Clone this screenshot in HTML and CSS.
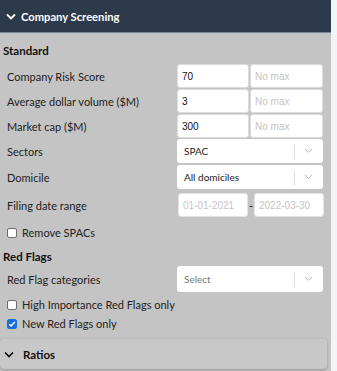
FILE: index.html
```html
<!DOCTYPE html>
<html lang="en">
<head>
  <meta charset="UTF-8" />
  <title>Company Screening</title>
  <link rel="stylesheet" href="styles.css">
</head>
<body>

  <div class="panel">
    <div class="panel-header">
      <svg class="chevron" width="10" height="7" viewBox="0 0 10 7"><path d="M1 1.5l4 4 4-4" fill="none" stroke="#fff" stroke-width="1.8"/></svg>
      Company Screening
    </div>

    <div class="section-title">Standard</div>

    <div class="row first-row">
      <label>Company Risk Score</label>
      <div class="pair">
        <input type="text" value="70">
        <input type="text" placeholder="No max">
      </div>
    </div>
    <div class="row">
      <label>Average dollar volume ($M)</label>
      <div class="pair">
        <input type="text" value="3">
        <input type="text" placeholder="No max">
      </div>
    </div>
    <div class="row">
      <label>Market cap ($M)</label>
      <div class="pair">
        <input type="text" value="300">
        <input type="text" placeholder="No max">
      </div>
    </div>
    <div class="row">
      <label>Sectors</label>
      <div class="select">
        <span>SPAC</span>
        <span class="sep"></span>
        <svg width="9" height="6" viewBox="0 0 9 6"><path d="M1 1l3.5 3.5L8 1" fill="none" stroke="#bbb" stroke-width="1"/></svg>
      </div>
    </div>
    <div class="row row-gap">
      <label>Domicile</label>
      <div class="select">
        <span>All domiciles</span>
        <span class="sep"></span>
        <svg width="9" height="6" viewBox="0 0 9 6"><path d="M1 1l3.5 3.5L8 1" fill="none" stroke="#bbb" stroke-width="1"/></svg>
      </div>
    </div>
    <div class="row date-row">
      <label>Filing date range</label>
      <div class="dates">
        <input type="text" placeholder="01-01-2021">
        <span class="dash">-</span>
        <input type="text" placeholder="2022-03-30">
      </div>
    </div>

    <div class="check first-check">
      <span class="box"></span>
      Remove SPACs
    </div>

    <div class="section-title flags-title">Red Flags</div>

    <div class="row flag-row">
      <label>Red Flag categories</label>
      <div class="select tall">
        <span class="placeholder">Select</span>
        <span class="sep"></span>
        <svg width="9" height="6" viewBox="0 0 9 6"><path d="M1 1l3.5 3.5L8 1" fill="none" stroke="#bbb" stroke-width="1"/></svg>
      </div>
    </div>

    <div class="check">
      <span class="box"></span>
      High Importance Red Flags only
    </div>
    <div class="check">
      <span class="box checked">
        <svg width="8" height="8" viewBox="0 0 8 8"><path d="M1.3 4.2l1.8 1.8L6.8 2" fill="none" stroke="#fff" stroke-width="1.5"/></svg>
      </span>
      New Red Flags only
    </div>

    <div class="collapsed">
      <svg width="10" height="7" viewBox="0 0 10 7"><path d="M1 1.5l4 4 4-4" fill="none" stroke="#111" stroke-width="1.7"/></svg>
      Ratios
    </div>
  </div>

</body>
</html>
```

FILE: styles.css
```css
body {
  margin: 0;
  background: #f3f4f6;
  font-family: Lato, sans-serif;
  font-size: 11px;
  color: #222;
}

.panel {
  width: 331px;
  height: 371px;
  background: #c4c4c4;
  overflow: hidden;
}

.panel-header {
  height: 32px;
  background: #2c3a4c;
  border-bottom: 1px solid #7d8791;
  color: #fff;
  font-weight: bold;
  font-size: 11.2px;
  display: flex;
  align-items: center;
  gap: 5px;
  padding-left: 6px;
}

.section-title {
  font-weight: bold;
  font-size: 11.5px;
  color: #111;
  padding-left: 3px;
  margin-top: 10px;
  line-height: 16px;
}

.row {
  display: flex;
  align-items: center;
  height: 24px;
  margin-top: 1px;
}

.first-row {
  margin-top: 5px;
}

.row label {
  width: 170px;
  padding-left: 7px;
}

.pair {
  display: flex;
  gap: 1px;
}

input {
  box-sizing: border-box;
  height: 24px;
  width: 72px;
  border: 1px solid #ddd;
  border-radius: 3px;
  padding: 0 4px;
  font-family: "Liberation Sans", Arial, sans-serif;
  font-size: 10px;
  color: #111;
  outline: none;
}

.pair input + input {
  width: 73px;
}

input::placeholder {
  color: #c4c4c4;
}

.select {
  box-sizing: border-box;
  width: 146px;
  height: 24px;
  background: #fff;
  border-radius: 3px;
  display: flex;
  align-items: center;
  padding: 0 10px 0 7px;
  font-size: 10px;
  color: #222;
}

.select span:first-child {
  flex: 1;
}

.select .sep {
  width: 1px;
  height: 15px;
  background: #ddd;
  margin-right: 9px;
}

.select .placeholder {
  color: #777;
}

.row-gap {
  margin-top: 2px;
}

.date-row {
  margin-top: 4px;
}

.dates {
  display: flex;
  align-items: center;
  padding-left: 1px;
}

.dates input {
  width: 70px;
  border-color: #e4e4e4;
}

.dash {
  width: 6px;
  text-align: center;
  color: #111;
  font-size: 11px;
}

.check {
  display: flex;
  align-items: center;
  gap: 5px;
  padding-left: 7px;
  height: 19px;
}

.first-check {
  margin-top: 6px;
}

.box {
  box-sizing: border-box;
  width: 10px;
  height: 10px;
  border: 1px solid #6e6e6e;
  border-radius: 2px;
  background: #fff;
  display: flex;
  align-items: center;
  justify-content: center;
}

.box.checked {
  background: #1a6fe0;
  border-color: #1a6fe0;
}

.flags-title {
  margin-top: 7px;
}

.flag-row {
  height: 26px;
}

.select.tall {
  height: 26px;
}

.flag-row + .check {
  margin-top: 3px;
}

.collapsed {
  margin-top: 6px;
  width: 327px;
  height: 30px;
  background: #c9c8c9;
  border-radius: 4px;
  box-shadow: 0 1px 3px rgba(0,0,0,0.25);
  display: flex;
  align-items: center;
  gap: 9px;
  padding-left: 4px;
  box-sizing: border-box;
  font-weight: bold;
  font-size: 11.5px;
  color: #111;
}
```
